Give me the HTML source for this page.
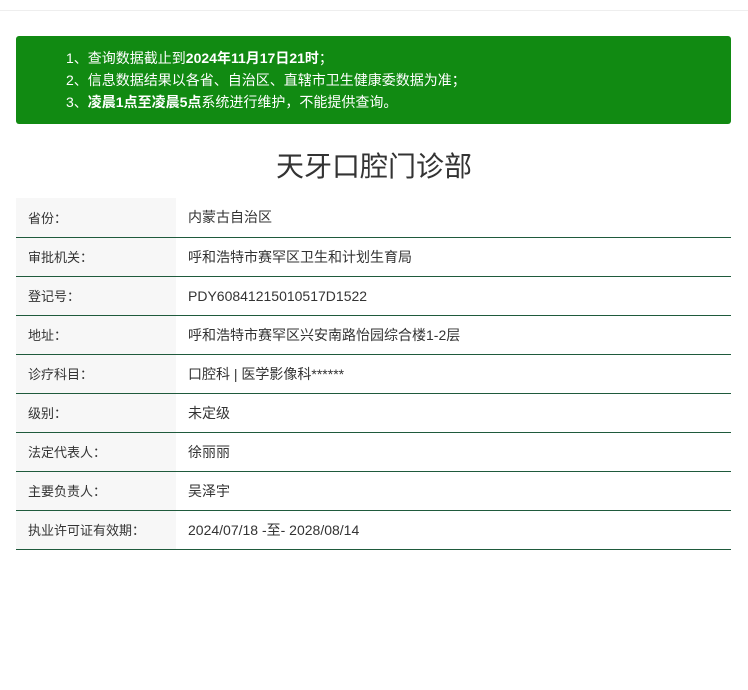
<!DOCTYPE html>
<html><head><meta charset="utf-8"><style>
body{margin:0;width:748px;height:690px;background:#fff;font-family:"Liberation Sans","Noto Sans CJK SC",sans-serif;position:relative;overflow:hidden}
.top{position:absolute;left:0;top:10px;width:748px;height:1px;background:#eee}
.notice{position:absolute;left:16px;top:36px;width:715px;height:88px;background:#118a12;border-radius:3px;color:#fff;font-size:14px}
.notice div{position:absolute;left:50px;white-space:nowrap;line-height:16px}
h1{position:absolute;top:147px;left:0;width:748px;text-align:center;margin:0;font-size:28px;font-weight:normal;color:#333;line-height:40px}
table{position:absolute;left:16px;top:198px;width:715px;border-collapse:collapse;font-size:13px;color:#333}
td{height:39px;border-bottom:1px solid #1f5a3c;padding:0;box-sizing:border-box}
td.l{width:160px;background:#f7f7f7;padding-left:12px}
td.v{padding-left:12px;font-size:14px}
</style></head><body>
<div class="top"></div>
<div class="notice">
<div style="top:14px">1、查询数据截止到<b>2024年11月17日21时</b>；</div>
<div style="top:36px">2、信息数据结果以各省、自治区、直辖市卫生健康委数据为准；</div>
<div style="top:58px">3、<b>凌晨1点至凌晨5点</b>系统进行维护，不能提供查询。</div>
</div>
<h1>天牙口腔门诊部</h1>
<table>
<tr><td class="l">省份：</td><td class="v">内蒙古自治区</td></tr>
<tr><td class="l">审批机关：</td><td class="v">呼和浩特市赛罕区卫生和计划生育局</td></tr>
<tr><td class="l">登记号：</td><td class="v">PDY60841215010517D1522</td></tr>
<tr><td class="l">地址：</td><td class="v">呼和浩特市赛罕区兴安南路怡园综合楼1-2层</td></tr>
<tr><td class="l">诊疗科目：</td><td class="v">口腔科 | 医学影像科******</td></tr>
<tr><td class="l">级别：</td><td class="v">未定级</td></tr>
<tr><td class="l">法定代表人：</td><td class="v">徐丽丽</td></tr>
<tr><td class="l">主要负责人：</td><td class="v">吴泽宇</td></tr>
<tr><td class="l">执业许可证有效期：</td><td class="v">2024/07/18 -至- 2028/08/14</td></tr>
</table>
</body></html>
